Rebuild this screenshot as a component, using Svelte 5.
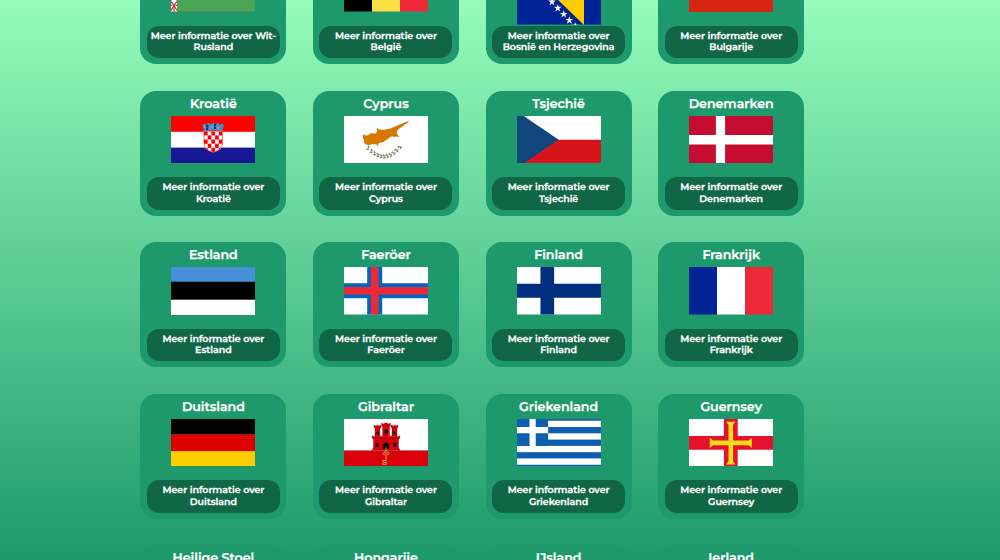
<script>
  const countries = [
    { name: 'Wit-Rusland', code: 'by' },
    { name: 'België', code: 'be' },
    { name: 'Bosnië en Herzegovina', code: 'ba' },
    { name: 'Bulgarije', code: 'bg' },
    { name: 'Kroatië', code: 'hr' },
    { name: 'Cyprus', code: 'cy' },
    { name: 'Tsjechië', code: 'cz' },
    { name: 'Denemarken', code: 'dk' },
    { name: 'Estland', code: 'ee' },
    { name: 'Faeröer', code: 'fo' },
    { name: 'Finland', code: 'fi' },
    { name: 'Frankrijk', code: 'fr' },
    { name: 'Duitsland', code: 'de' },
    { name: 'Gibraltar', code: 'gi' },
    { name: 'Griekenland', code: 'gr' },
    { name: 'Guernsey', code: 'gg' },
    { name: 'Heilige Stoel', code: 'va' },
    { name: 'Hongarije', code: 'hu' },
    { name: 'IJsland', code: 'is' },
    { name: 'Ierland', code: 'ie' }
  ];
  const horizontal = {
    bg: { h: 16.8, colors: ['#fff', '#00966e', '#d62612'] },
    ee: { h: 17.8, colors: ['#4891d9', '#000', '#fff'] },
    de: { h: 16.8, colors: ['#000', '#d00', '#ffce00'] },
    hu: { h: 15.7, colors: ['#ce2939', '#fff', '#477050'] },
    hr: { h: 15.7, colors: ['#f00', '#fff', '#171796'] }
  };
  const vertical = {
    be: ['#000', '#fae042', '#ed2939'],
    fr: ['#002395', '#fff', '#ed2939'],
    ie: ['#169b62', '#fff', '#ff883e'],
    va: ['#ffe000', '#ffe000', '#fff']
  };
  const checks = Array.from({ length: 25 }, (_, i) => i).filter((i) => i % 2 === 0);
  const leaves = Array.from({ length: 11 }, (_, i) => {
    const t = (i - 5) / 5;
    return { x: 39.5 + t * 16, y: 40.3 - t * t * 8.8, a: -t * 48 };
  });
  const stars = [[29.3, 18], [35, 24.5], [40.8, 30.8], [46.7, 36.8], [52.4, 42.8], [58.2, 48.6]];
</script>

<main>
  {#each countries as c}
    <article>
      <div class="top">
        <h2>{c.name}</h2>
        <svg class="flag" viewBox="0 0 84 47" preserveAspectRatio="none">
          {#if horizontal[c.code]}
            {#each horizontal[c.code].colors as color, i}
              <rect y={23.5 + (i - 1.5) * horizontal[c.code].h} width="84" height={horizontal[c.code].h + 0.1} fill={color} />
            {/each}
          {/if}
          {#if vertical[c.code]}
            {#each vertical[c.code] as color, i}
              <rect x={i * 28} width="28.1" height="47" fill={color} />
            {/each}
          {/if}
          {#if c.code === 'hr'}
            <path d="M32.7 14.5h19v13q0 6-9.5 8.7q-9.5-2.7-9.5-8.7z" fill="#fff" />
            <clipPath id="shield"><path d="M33 15h18.4v12.5q0 5.7-9.2 8.2q-9.2-2.5-9.2-8.2z" /></clipPath>
            <g clip-path="url(#shield)" fill="#f00">
              {#each checks as i}
                <rect x={33 + (i % 5) * 3.7} y={15 + Math.floor(i / 5) * 4.15} width="3.7" height="4.15" />
              {/each}
            </g>
            <path d="M33 15h18.4v12.5q0 5.7-9.2 8.2q-9.2-2.5-9.2-8.2z" fill="none" stroke="#f00" stroke-width=".6" />
            <path d="M33.5 15l-2.200-5 1.500-2.500 2.500 1.200 2-1.900 2.300 1.400 2.600-1.500 2.500 1.500 2.400-1.400 1.900 1.900 2.500-1.200 1.500 2.500-2.200 5q-8.600-2.500-17.300 0z" fill="#3f93cf" />
            <path d="M36.4 8.5l-.3 5.5M44 7.8v5.3" stroke="#0b2f8c" stroke-width="2" />
            <path d="M33 11h2M39.5 11.2h2M46.3 11.5h2" stroke="#c9a44a" stroke-width="1.2" />
            <path d="M36 11.2h2M43 10.5h2M49.5 11.7h2" stroke="#b2405b" stroke-width=".8" />
          {:else if c.code === 'cy'}
            <rect width="84" height="47" fill="#fff" />
            <path d="M19 19l1.500-1 1 1.200 3-.2 1.500-2 6 .3 1-2.300-.3-3.500 2.200 1.500q4 1.200 8.500.2 4-.7 7.500-2.800L62 6l3-1.300-.8 1.500L54.500 13q-1.700 1.500-2 3.300l2.700 4.800-2.500-.9-2.300.7-2-.8q-2.500 0-4 2.500l-2.800 1.300-2 1.800-3.500.8-1.700.8-.8 2.500-1.400-1.800-4.500-.1q-4.500 2-7.500-1l-.2-3.400-1.200-2z" fill="#d57800" />
            {#each leaves as l}
              <g transform={`translate(${l.x} ${l.y}) rotate(${l.a})`} fill="#4e5b31" opacity=".75">
                <ellipse cx="-.5" cy="-1.2" rx="1.5" ry=".8" transform="rotate(30)" />
                <ellipse cx=".5" cy="1.2" rx="1.5" ry=".8" transform="rotate(-30)" />
              </g>
            {/each}
          {:else if c.code === 'cz'}
            <rect width="84" height="24" fill="#fff" />
            <rect y="23.5" width="84" height="23.5" fill="#d7141a" />
            <path d="M0 0h6.7l35 23.5L6.7 47H0z" fill="#11457e" />
          {:else if c.code === 'dk'}
            <rect width="84" height="47" fill="#c60c30" />
            <path d="M31.5 0v47M0 23.5h84" stroke="#fff" stroke-width="9.2" />
          {:else if c.code === 'fo'}
            <rect width="84" height="47" fill="#fff" />
            <path d="M30.7 0v47M0 23.5h84" stroke="#0065bd" stroke-width="15" />
            <path d="M30.7 0v47M0 23.5h84" stroke="#ed2939" stroke-width="7.6" />
          {:else if c.code === 'fi' || c.code === 'is'}
            <rect width="84" height="47" fill="#fff" />
            <path d="M30.3 0v47M0 23.5h84" stroke="#002f80" stroke-width="13.7" />
          {:else if c.code === 'gr'}
            <rect width="84" height="47" fill="#fff" />
            {#each [0, 2, 4, 6, 8] as i}
              <rect y={i * 6.22 - 4.5} width="84" height="6.22" fill="#0d5eaf" />
            {/each}
            <rect width="31.1" height="26.6" fill="#0d5eaf" />
            <path d="M15.6 0v26.6M0 11.1h31.1" stroke="#fff" stroke-width="6.2" />
          {:else if c.code === 'gg'}
            <rect width="84" height="47" fill="#fff" />
            <path d="M41.8 0v47M0 23.6h84" stroke="#e8112d" stroke-width="13.8" />
            <path d="M37 2.7h9.6l-2.5 3v15.6h15.5l3.2-2.7v10l-3.2-2.7H44.1V42l2.5 3H37l2.5-3V25.9H24l-3.2 2.7v-10l3.2 2.7h15.5V5.7z" fill="#f9dd16" />
          {:else if c.code === 'gi'}
            <rect width="84" height="31.3" fill="#fff" />
            <rect y="31.2" width="84" height="15.8" fill="#da000c" />
            <g fill="#da000c" stroke="#4a080b" stroke-width=".3">
              <path d="M31 17V9.5L30 8V6l2 1 1.5-1L35 7l2-1v2l-1 1.5V17zM48 17V9.5L47 8V6l2 1 1.5-1L52 7l2-1v2l-1 1.5V17z" />
              <path d="M28 18.5v-2l2 1 2-1 2 1 2-1 2.5 1V8L37.5 6.5V4l2 1 1.5-1h2l1.5 1 2-1v2.5L45.5 8v9.5l2.5-1 2 1 2-1 2 1 2-1v2l-1.500 2V28l1.500 3H28l1.500-3v-7.500z" />
            </g>
            <path d="M29.5 19.2h25M31.5 9h5M39 7.5h6M48 9h5" stroke="#5b080d" stroke-width=".5" />
            <path d="M32.5 15v-2q1.200-2 2.400 0v2zM40.500 14.500v-3q1.500-2.500 3 0v3zM49 15v-2q1.200-2 2.400 0v2zM31.500 27.500v-3q1.500-2.200 3 0v3zM39 30v-5q3-4 6 0v5zM49.500 27.500v-3q1.500-2.200 3 0v3z" fill="#160507" />
            <path d="M42 35v10.500M42 41h-3v4h3M40 43h2" fill="none" stroke="#e3a02c" stroke-width="1.1" />
            <path d="M42 28v3" stroke="#e3a02c" stroke-width=".8" />
            <circle cx="42" cy="32" r="1.1" fill="none" stroke="#e3a02c" stroke-width=".8" />
            <circle cx="40" cy="34.3" r="1.2" fill="none" stroke="#e3a02c" stroke-width=".8" />
            <circle cx="44" cy="34.3" r="1.2" fill="none" stroke="#e3a02c" stroke-width=".8" />
          {:else if c.code === 'by'}
            <rect width="84" height="47" fill="#c8313e" />
            <rect y="31" width="84" height="16" fill="#4aa657" />
            <rect width="6" height="47" fill="#fff" />
            <path d="M0 31l3 3 3-3M0 36l3-3 3 3M0 37l3 4 3-4M0 46l3-5 3 5M3 43v4M0 41h1.300M4.700 41H6" fill="none" stroke="#c8313e" stroke-width="1.2" />
          {:else if c.code === 'ba'}
            <rect width="84" height="47" fill="#002395" />
            <path d="M17.5 0H67v47.5z" fill="#fecb00" />
            {#each stars as s}
              <path transform={`translate(${s[0]} ${s[1]}) scale(1.15)`} d="M0-3.400l.8 2.300h2.500l-2 1.500.8 2.500L0 1.400l-2.100 1.500.8-2.500-2-1.500h2.500z" fill="#fff" />
            {/each}
          {/if}
        </svg>
      </div>
      <a href="#{c.code}">Meer informatie over {c.name}</a>
    </article>
  {/each}
</main>

<style>
  :global(body) {
    margin: 0;
    height: 560px;
    overflow: hidden;
    background: linear-gradient(#95fcba, #1e996b);
  }
  main {
    display: grid;
    grid-template-columns: repeat(4, 146px);
    grid-auto-rows: 125px;
    gap: 26.5px 26.6px;
    width: 664px;
    margin: -61px 0 0 140.4px;
    font-family: Montserrat, Inter, sans-serif;
    color: #fff;
    text-align: center;
    text-rendering: geometricPrecision;
    -webkit-text-stroke: 0.3px #fff;
  }
  article {
    box-sizing: border-box;
    display: flex;
    flex-direction: column;
    align-items: center;
    justify-content: space-between;
    padding: 6px 6.5px;
    border-radius: 16px;
    background: #1e996c;
  }
  .top {
    height: 80px;
    width: 100%;
  }
  h2 {
    margin: 0 0 5px;
    padding-top: 1px;
    font-size: 12.6px;
    line-height: 13px;
    font-weight: 600;
  }
  .flag {
    display: block;
    width: 84px;
    height: 47.5px;
    margin: 0 auto;
  }
  a {
    position: relative;
    display: flex;
    align-items: center;
    justify-content: center;
    box-sizing: border-box;
    width: 133px;
    height: 32.5px;
    padding: 1px 2px 0;
    border-radius: 12px;
    background: #106647;
    color: #fff;
    font-size: 9.45px;
    line-height: 11.5px;
    font-weight: 600;
    text-decoration: none;
  }
</style>
